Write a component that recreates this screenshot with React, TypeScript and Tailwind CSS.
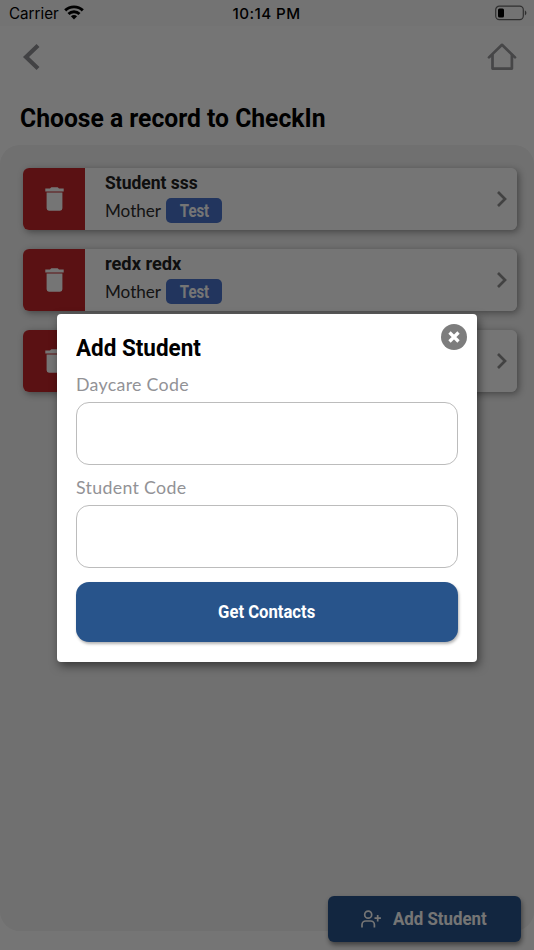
import type { ReactNode } from "react";

const heading = "font-['Roboto','Liberation_Sans',sans-serif] font-bold whitespace-nowrap";
const body = "font-['Lato','Open_Sans',sans-serif] whitespace-nowrap";

function StatusBar() {
  return (
    <div className="flex h-[26px] items-center justify-between bg-[#fafafa] pl-[9px] pr-[7px] font-['Inter',sans-serif] text-black">
      <div className="flex w-[140px] items-center gap-[6px] text-[15.2px]">
        <span className="w-[49px] pt-[2px] whitespace-nowrap">Carrier</span>
        <svg width="20" height="15" viewBox="0 0 20 15" fill="none" stroke="black" strokeWidth="2.9">
          <path d="M1.2 5.4C6 .7 14 .7 18.8 5.4" />
          <path d="M4.5 9C7.5 6 12.5 6 15.5 9" />
          <path d="M6.9 11.3Q10 8.7 13.1 11.3L10 14.4Z" fill="black" stroke="none" />
        </svg>
      </div>
      <span className="mr-[3px] pt-[2px] text-[15.2px] font-medium tracking-[0.42px] whitespace-nowrap">10:14 PM</span>
      <div className="flex w-[140px] justify-end">
        <svg width="33" height="16" viewBox="0 0 33 16" fill="none">
          <rect x="1.7" y="1.2" width="27.6" height="13.4" rx="3.6" stroke="#686868" strokeWidth="1.2" />
          <rect x="4" y="3.4" width="6" height="9" rx="1.5" fill="black" />
          <path d="M30.9 5.3Q34 7.9 30.9 10.5Z" fill="#686868" />
        </svg>
      </div>
    </div>
  );
}

function TrashIcon() {
  return (
    <svg width="19" height="24" viewBox="0 0 19 24" fill="#fff">
      <path d="M.3 1.6H5L6.3.3h6.4L14 1.6h4.7v2.8H.3zM1.6 5.5h15.8v15.8a2.4 2.4 0 0 1-2.4 2.4H4a2.4 2.4 0 0 1-2.4-2.4z" />
    </svg>
  );
}

function RecordCard({ name, nameClass }: { name?: string; nameClass?: string }) {
  return (
    <div className="flex h-[62px] overflow-hidden rounded-[6px] bg-white">
      <div className="flex w-[62px] items-center justify-center bg-[#c4272a]">
        <TrashIcon />
      </div>
      <div className="flex flex-1 flex-col pl-[20px] pt-[3px] text-[#222]">
        {name && (
          <>
            <span className={`${heading} h-[23px] origin-left text-[19px] leading-[23px] ${nameClass}`}>{name}</span>
            <div className="flex items-center pt-[4px]">
              <span className={`${body} w-[61px] text-[17.1px] leading-[24px] text-[#2c2c2c]`}>Mother</span>
              <span className="flex h-[25px] w-[56px] items-center justify-center rounded-[5px] bg-[#4b75cc]">
                <span className={`${heading} scale-x-[0.84] pt-[1px] text-[17.8px] leading-[24px] text-white`}>Test</span>
              </span>
            </div>
          </>
        )}
      </div>
      <div className="flex w-[22px] items-center">
        <svg width="12" height="16" viewBox="0 0 12 16" fill="none" stroke="#909090" strokeWidth="2.7">
          <path d="M3 1L10 8l-7 7" />
        </svg>
      </div>
    </div>
  );
}

function Shadowed({ children }: { children: ReactNode }) {
  return <div className="rounded-[6px] shadow-[2px_2px_7px_rgba(0,0,0,0.38)]">{children}</div>;
}

function Field({ label }: { label: string }) {
  return (
    <label className="flex flex-col">
      <span className={`${body} h-[26px] text-[17.8px] leading-[26px] tracking-[0.3px] text-[#929296]`}>{label}</span>
      <input className="mt-[4.5px] h-[63.5px] w-full rounded-[13px] border border-[#bcbcbc] bg-white px-4 outline-none" />
    </label>
  );
}

function AddStudentDialog() {
  return (
    <div className="relative h-[348px] w-[420px] rounded-[4px] bg-white px-[19px] pt-[18px] shadow-[2px_4px_10px_rgba(0,0,0,0.5)]">
      <h2 className={`${heading} h-[32px] origin-left scale-x-[0.905] text-[24.8px] leading-[32px] text-black`}>Add Student</h2>
      <button className="absolute right-[10px] top-[10px] flex h-[26px] w-[26px] items-center justify-center rounded-full bg-[#7d7d7d]">
        <svg width="12" height="12" viewBox="0 0 12 12" stroke="white" strokeWidth="3.3">
          <path d="M1.5 1.5l9 9M10.5 1.5l-9 9" />
        </svg>
      </button>
      <div className="flex flex-col gap-[9px] pt-[7px]">
        <Field label="Daycare Code" />
        <Field label="Student Code" />
      </div>
      <button className="mt-[13.5px] flex h-[60.5px] w-full items-center justify-center rounded-[13px] bg-[#28548b] shadow-[1px_2px_3px_rgba(0,0,0,0.3)]">
        <span className={`${heading} scale-x-[0.905] text-[18.4px] text-white`}>Get Contacts</span>
      </button>
    </div>
  );
}

export default function App() {
  return (
    <div className="relative flex h-[950px] w-[534px] flex-col overflow-hidden bg-white">
      <StatusBar />
      <header className="flex h-[62px] items-center justify-between pl-[22px] pr-[17px]">
        <svg width="19" height="28" viewBox="0 0 19 28" fill="none" stroke="#909094" strokeWidth="4.2">
          <path d="M16 2.4L4 14l12 11.6" />
        </svg>
        <svg width="30" height="28" viewBox="0 0 30 28" fill="none" stroke="#98989c" strokeWidth="2.7" strokeLinejoin="round" strokeLinecap="round">
          <path d="M2 14.4L15 1.8l13 12.6" />
          <path d="M5.5 12v13.6h19.4V12" />
        </svg>
      </header>
      <div className="flex h-[57px] items-center pl-[20px] pt-[4px]">
        <h1 className={`${heading} origin-left scale-x-[0.935] text-[26.4px] text-black`}>Choose a record to CheckIn</h1>
      </div>
      <main className="flex h-[786px] flex-col gap-[19.2px] rounded-[20px] bg-[#f3f3f3] pl-[23px] pr-[17px] pt-[23px]">
        <Shadowed><RecordCard name="Student sss" nameClass="scale-x-[0.92]" /></Shadowed>
        <Shadowed><RecordCard name="redx redx" nameClass="scale-x-[0.96]" /></Shadowed>
        <Shadowed><RecordCard /></Shadowed>
      </main>
      <button className="absolute bottom-[8px] right-[13px] flex h-[46.5px] w-[193.5px] items-center rounded-[6px] bg-[#28548b] pl-[33px] text-white shadow-[1px_3px_5px_rgba(0,0,0,0.45)]">
        <svg width="21" height="18" viewBox="0 0 21 18" fill="none" stroke="white" strokeWidth="1.7">
          <circle cx="7.2" cy="4.7" r="3.5" />
          <path d="M1 17.4v-2.7a3.7 3.7 0 0 1 3.7-3.7h5a3.7 3.7 0 0 1 3.7 3.7v2.7M16.7 5v6.4M13.5 8.2h6.4" />
        </svg>
        <span className={`${heading} ml-[11.5px] origin-left scale-x-[0.905] pt-[2px] text-[18.6px]`}>Add Student</span>
      </button>
      <div className="absolute inset-0 flex items-start justify-center bg-black/54 pt-[314px]">
        <AddStudentDialog />
      </div>
    </div>
  );
}
